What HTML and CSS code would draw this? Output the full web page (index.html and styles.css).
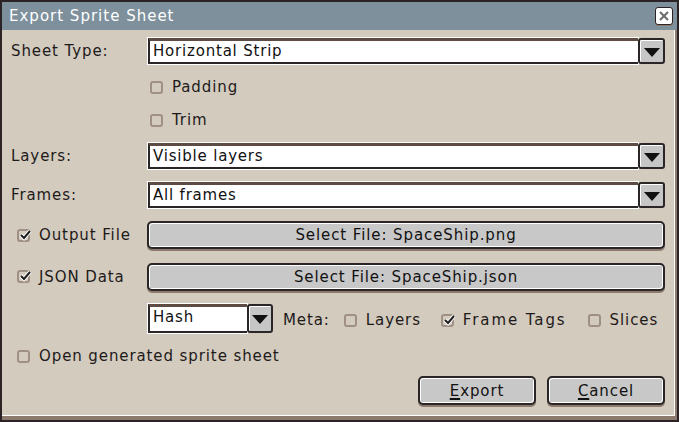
FILE: index.html
```html
<!DOCTYPE html>
<html>
<head>
<meta charset="utf-8">
<link rel="stylesheet" href="styles.css">
</head>
<body>
<div class="window">
  <div class="titlebar">
    <span class="title">Export Sprite Sheet</span>
    <span class="close"><svg width="12" height="12" viewBox="0 0 12 12"><path d="M2 2 L10 10 M10 2 L2 10" stroke="#6b6b6b" stroke-width="2"/></svg></span>
  </div>
  <div class="content">
    <div class="grid">
      <div class="label">Sheet Type:</div>
      <div class="combo"><div class="entry">Horizontal Strip</div><div class="drop"><span class="tri"></span></div></div>

      <div></div>
      <div class="check"><span class="box"></span>Padding</div>

      <div></div>
      <div class="check"><span class="box"></span>Trim</div>

      <div class="label">Layers:</div>
      <div class="combo"><div class="entry">Visible layers</div><div class="drop"><span class="tri"></span></div></div>

      <div class="label">Frames:</div>
      <div class="combo"><div class="entry">All frames</div><div class="drop"><span class="tri"></span></div></div>

      <div class="check indent"><span class="box checked"><svg width="14" height="14" viewBox="0 0 14 14"><path d="M3 7 L6 10 L12 3" fill="none" stroke="#fff" stroke-width="4"/><path d="M3 7 L6 10 L12 3" fill="none" stroke="#1e1e1e" stroke-width="2"/></svg></span>Output File</div>
      <div class="button wide">Select File: SpaceShip.png</div>

      <div class="check indent"><span class="box checked"><svg width="14" height="14" viewBox="0 0 14 14"><path d="M3 7 L6 10 L12 3" fill="none" stroke="#fff" stroke-width="4"/><path d="M3 7 L6 10 L12 3" fill="none" stroke="#1e1e1e" stroke-width="2"/></svg></span>JSON Data</div>
      <div class="button wide">Select File: SpaceShip.json</div>

      <div></div>
      <div class="metarow">
        <div class="combo small"><div class="entry">Hash</div><div class="drop"><span class="tri"></span></div></div>
        <span class="meta">Meta:</span>
        <div class="check c-layers"><span class="box"></span>Layers</div>
        <div class="check c-tags"><span class="box checked"><svg width="14" height="14" viewBox="0 0 14 14"><path d="M3 7 L6 10 L12 3" fill="none" stroke="#fff" stroke-width="4"/><path d="M3 7 L6 10 L12 3" fill="none" stroke="#1e1e1e" stroke-width="2"/></svg></span><span class="wide-text">Frame Tags</span></div>
        <div class="check"><span class="box"></span>Slices</div>
      </div>

      <div class="check indent span2"><span class="box"></span>Open generated sprite sheet</div>
    </div>
    <div class="actions">
      <div class="button action"><u>E</u>xport</div>
      <div class="button action"><u>C</u>ancel</div>
    </div>
  </div>
</div>
</body>
</html>
```

FILE: styles.css
```css
* { box-sizing: border-box; }
html, body { margin: 0; padding: 0; }
body {
  width: 679px;
  height: 422px;
  overflow: hidden;
  font-family: "DejaVu Sans", sans-serif;
  font-size: 15px;
  letter-spacing: 0.9px;
  color: #1e1a1a;
}
.window {
  width: 679px;
  height: 422px;
  border: 2px solid #2b2325;
  background: #d3cbbe;
  box-shadow: inset -2px -4px 0 #8b7a6d, inset -3px -5px 0 #ffffff;
  display: flex;
  flex-direction: column;
}
.titlebar {
  height: 28px;
  background: #7d909c;
  display: flex;
  align-items: center;
  justify-content: space-between;
  padding: 0 4px 0 7px;
}
.title {
  color: #ffffff;
  font-size: 15px;
  letter-spacing: 1px;
}
.close {
  width: 18px;
  height: 18px;
  background: #ffffff;
  border: 1px solid #2b2325;
  border-radius: 3px;
  box-shadow: 0 1px 0 #8b7a6d;
  display: flex;
  align-items: center;
  justify-content: center;
}
.content {
  padding: 8px 12px 0 9px;
}
.grid {
  display: grid;
  grid-template-columns: 137px 1fr;
  grid-template-rows: 26px 20px 20px 26px 26px 28px 29px 29px 20px;
  row-gap: 13px;
  align-items: center;
}
.combo {
  display: flex;
  height: 26px;
}
.entry {
  flex: 1;
  background: #ffffff;
  border: 2px solid #2a2626;
  border-top: 3px solid #5e4c44;
  border-right: none;
  outline: 1px solid #ffffff;
  padding-left: 3px;
  line-height: 20px;
  white-space: nowrap;
  overflow: hidden;
  color: #111;
  letter-spacing: 0.8px;
}
.drop {
  width: 27px;
  background: #c6c6c6;
  border: 2px solid #2a2626;
  border-radius: 3px;
  box-shadow: inset 1px 1px 0 #ffffff;
  display: flex;
  align-items: center;
  justify-content: center;
}
.tri {
  width: 0;
  height: 0;
  border-left: 8px solid transparent;
  border-right: 8px solid transparent;
  border-top: 9px solid #111;
  margin-top: 2px;
}
.check {
  display: flex;
  align-items: center;
  white-space: nowrap;
}
.check.indent { padding-left: 6px; }
.grid > .check:not(.indent) { padding-left: 2px; }
.box {
  width: 13px;
  height: 13px;
  border: 2px solid #a09084;
  border-radius: 3px;
  margin-right: 9px;
  position: relative;
  flex: none;
}
.box svg {
  position: absolute;
  left: -1px;
  top: -3px;
}
.button {
  background: #c8c8c8;
  border: 2px solid #2a2626;
  border-radius: 5px;
  box-shadow: inset 1px 1px 0 #ffffff, inset -1px -1px 0 #ffffff, 0 2px 0 #8b7a6d;
  display: flex;
  align-items: center;
  justify-content: center;
  color: #111;
  white-space: nowrap;
}
.wide { height: 28px; margin-left: -1px; }
.metarow {
  display: flex;
  align-items: center;
  padding-top: 3px;
}
.combo.small {
  width: 125px;
  height: 29px;
  margin-top: -3px;
}
.combo.small .drop { width: 26px; }
.meta { margin-left: 10px; margin-right: 14px; }
.c-layers { margin-right: 20px; }
.c-tags { margin-right: 21px; }
.wide-text { letter-spacing: 1.9px; }
.span2 { grid-column: 1 / 3; }
.actions {
  display: flex;
  justify-content: flex-end;
  gap: 11px;
  margin-top: 10px;
}
.action {
  width: 118px;
  height: 29px;
}
u { text-decoration-thickness: 2px; text-underline-offset: 2px; }
```
